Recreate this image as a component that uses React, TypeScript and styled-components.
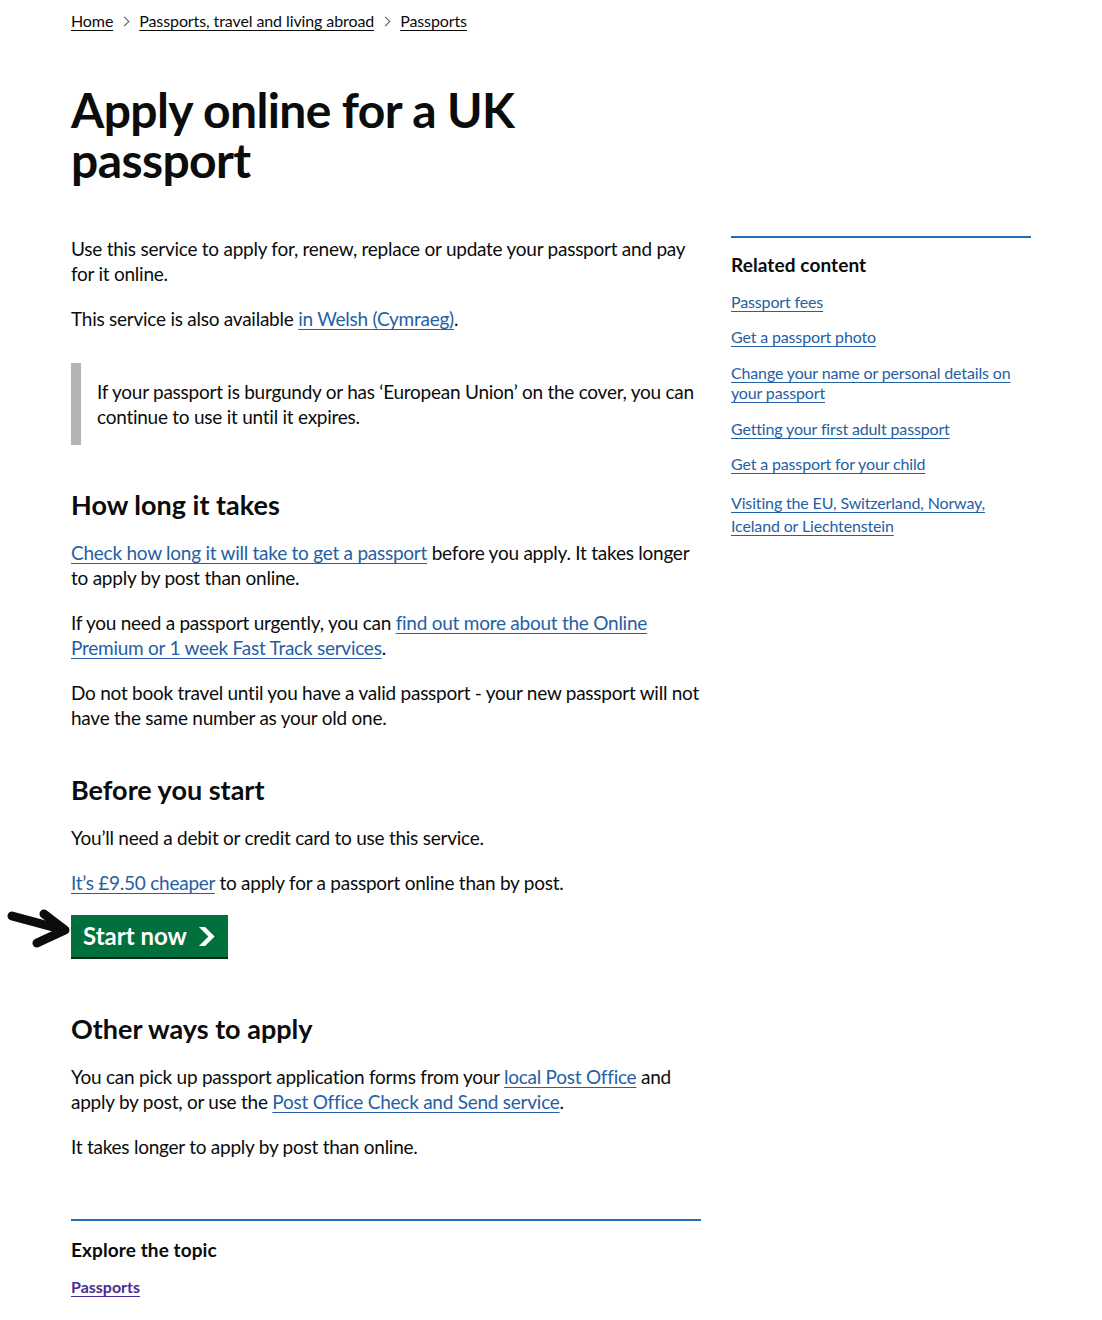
import React from "react";
import styled, { createGlobalStyle } from "styled-components";

const GlobalStyle = createGlobalStyle`
  html, body { margin: 0; padding: 0; background: #ffffff; }
  body {
    font-family: Lato, "Noto Sans", Arial, sans-serif;
    color: #0b0c0c;
    -webkit-font-smoothing: antialiased;
  }
`;

const Container = styled.div`
  max-width: 960px;
  margin: 0 auto;
  padding-bottom: 30px;
`;

const Breadcrumbs = styled.nav`
  padding-top: 11px;
`;

const CrumbList = styled.ol`
  list-style: none;
  margin: 0;
  padding: 0;
  display: flex;
  align-items: center;
  font-size: 16px;
  line-height: 20px;
  letter-spacing: -0.1px;
`;

const CrumbItem = styled.li<{ $first?: boolean }>`
  display: flex;
  align-items: center;
  ${(p) => (p.$first ? "" : "margin-left: 8px;")}
`;

const CrumbChevron = styled.span`
  display: inline-block;
  width: 6px;
  height: 6px;
  border-top: 1px solid #505a5f;
  border-right: 1px solid #505a5f;
  transform: rotate(45deg);
  margin-right: 11px;
`;

const CrumbLink = styled.a`
  color: #0b0c0c;
  text-decoration: underline;
  text-decoration-thickness: 1px;
  text-underline-offset: 3px;
`;

const Title = styled.h1`
  font-size: 48px;
  line-height: 50px;
  font-weight: 700;
  margin: 54px 0 0;
  max-width: 630px;
  letter-spacing: -0.6px;
`;

const Row = styled.div`
  display: grid;
  grid-template-columns: 630px 300px;
  column-gap: 30px;
  margin-top: 51px;
  align-items: start;
`;

const MainCol = styled.main``;

const Para = styled.p`
  font-size: 19px;
  line-height: 25px;
  letter-spacing: -0.25px;
  margin: 0 0 20px;
`;

const Link = styled.a<{ $visited?: boolean }>`
  color: ${(p) => (p.$visited ? "#4c2c92" : "#2560a3")};
  text-decoration: underline;
  text-decoration-thickness: 1px;
  text-underline-offset: 3px;
`;

const Inset = styled.div`
  border-left: 10px solid #b1b4b6;
  padding: 16px 0 16px 16px;
  margin: 32px 0 30px;
`;

const InsetText = styled.p`
  font-size: 19px;
  line-height: 25px;
  letter-spacing: -0.25px;
  margin: 0;
`;

const H2 = styled.h2`
  font-size: 27px;
  line-height: 30px;
  font-weight: 700;
  margin: 45px 0 20px;
`;

const ButtonWrap = styled.div`
  position: relative;
  margin: 20px 0 57px;
  display: flex;
`;

const StartButton = styled.a`
  display: inline-flex;
  align-items: center;
  gap: 11px;
  background: #00703c;
  color: #ffffff;
  font-size: 24px;
  line-height: 1;
  font-weight: 700;
  padding: 9px 13px 9px 12px;
  height: 42px;
  box-sizing: border-box;
  box-shadow: 0 2px 0 #002d18;
  text-decoration: none;
`;

const Annotation = styled.svg`
  position: absolute;
  left: -65px;
  top: -7px;
`;

const Explore = styled.section`
  border-top: 2px solid #1d70b8;
  margin-top: 60px;
  padding-top: 16px;
`;

const SmallHeading = styled.h2`
  font-size: 19px;
  line-height: 25px;
  font-weight: 700;
  margin: 0;
  letter-spacing: 0.1px;
`;

const ExploreLink = styled.a`
  display: inline-block;
  margin-top: 15px;
  font-size: 16px;
  line-height: 20px;
  font-weight: 700;
  color: #4c2c92;
  text-decoration: underline;
  text-decoration-thickness: 1px;
  text-underline-offset: 3px;
`;

const Sidebar = styled.aside`
  border-top: 2px solid #1d70b8;
  padding-top: 14px;
`;

const RelatedList = styled.ul`
  list-style: none;
  margin: 15px 0 0;
  padding: 0;
  display: flex;
  flex-direction: column;
  letter-spacing: -0.15px;
`;

const RelatedItem = styled.li<{ $lh?: number; $mt?: number }>`
  font-size: 16px;
  line-height: ${(p) => p.$lh ?? 20}px;
  margin-top: ${(p) => p.$mt ?? 15}px;
  &:first-child { margin-top: 0; }
`;

const related: { text: string; lh?: number; mt?: number }[] = [
  { text: "Passport fees" },
  { text: "Get a passport photo" },
  { text: "Change your name or personal details on your passport", mt: 16 },
  { text: "Getting your first adult passport", mt: 16 },
  { text: "Get a passport for your child" },
  { text: "Visiting the EU, Switzerland, Norway, Iceland or Liechtenstein", lh: 23, mt: 17 },
];

export default function App() {
  return (
    <>
      <GlobalStyle />
      <Container>
        <Breadcrumbs aria-label="Breadcrumb">
          <CrumbList>
            <CrumbItem $first>
              <CrumbLink href="#">Home</CrumbLink>
            </CrumbItem>
            <CrumbItem>
              <CrumbChevron />
              <CrumbLink href="#">Passports, travel and living abroad</CrumbLink>
            </CrumbItem>
            <CrumbItem>
              <CrumbChevron />
              <CrumbLink href="#">Passports</CrumbLink>
            </CrumbItem>
          </CrumbList>
        </Breadcrumbs>

        <Title>Apply online for a UK passport</Title>

        <Row>
          <MainCol>
            <Para>
              Use this service to apply for, renew, replace or update your passport and pay for it online.
            </Para>
            <Para>
              This service is also available <Link href="#">in Welsh (Cymraeg)</Link>.
            </Para>
            <Inset>
              <InsetText>
                If your passport is burgundy or has ‘European Union’ on the cover, you can continue to use it until it expires.
              </InsetText>
            </Inset>

            <H2>How long it takes</H2>
            <Para>
              <Link href="#">Check how long it will take to get a passport</Link> before you apply. It takes longer to apply by post than online.
            </Para>
            <Para>
              If you need a passport urgently, you can{" "}
              <Link href="#">find out more about the Online Premium or 1 week Fast Track services</Link>.
            </Para>
            <Para>
              Do not book travel until you have a valid passport - your new passport will not have the same number as your old one.
            </Para>

            <H2>Before you start</H2>
            <Para>You’ll need a debit or credit card to use this service.</Para>
            <Para>
              <Link href="#">It’s £9.50 cheaper</Link> to apply for a passport online than by post.
            </Para>
            <ButtonWrap>
              <Annotation width="64" height="42" viewBox="0 0 64 42" aria-hidden="true">
                <g fill="none" stroke="#0b0c0c" strokeWidth="9" strokeLinecap="round" strokeLinejoin="round">
                  <path d="M6 8 L58 22" />
                  <path d="M38 6 L59 22 L31 35" />
                </g>
              </Annotation>
              <StartButton href="#" role="button">
                Start now
                <svg width="17.5" height="19" viewBox="0 0 33 40" aria-hidden="true">
                  <path fill="currentColor" d="M0 0h13l20 20-20 20H0l20-20z" />
                </svg>
              </StartButton>
            </ButtonWrap>

            <H2>Other ways to apply</H2>
            <Para>
              You can pick up passport application forms from your <Link href="#">local Post Office</Link> and apply by post, or use the{" "}
              <Link href="#">Post Office Check and Send service</Link>.
            </Para>
            <Para>It takes longer to apply by post than online.</Para>

            <Explore>
              <SmallHeading>Explore the topic</SmallHeading>
              <ExploreLink href="#">Passports</ExploreLink>
            </Explore>
          </MainCol>

          <Sidebar>
            <SmallHeading>Related content</SmallHeading>
            <RelatedList>
              {related.map((r) => (
                <RelatedItem key={r.text} $lh={r.lh} $mt={r.mt}>
                  <Link href="#">{r.text}</Link>
                </RelatedItem>
              ))}
            </RelatedList>
          </Sidebar>
        </Row>
      </Container>
    </>
  );
}
